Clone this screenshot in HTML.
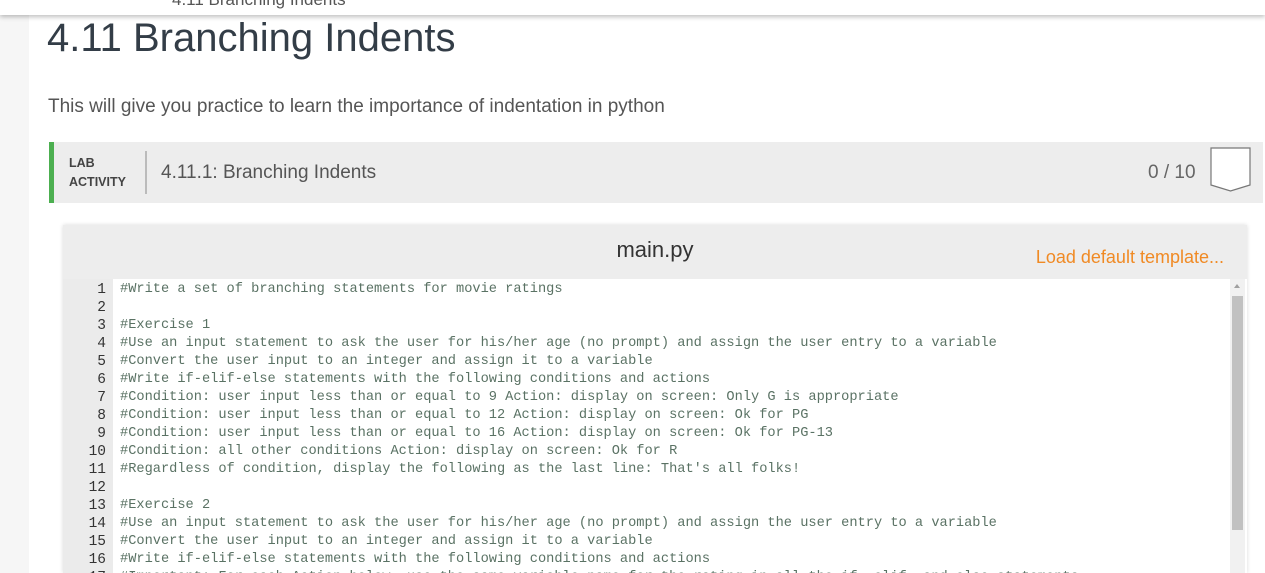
<!DOCTYPE html>
<html style="margin:0;width:1265px;height:573px;overflow:hidden"><head><style>
body{margin:0;width:1265px;height:573px;overflow:hidden;background:#f6f6f6;font-family:"Liberation Sans",sans-serif;position:relative}
.main{position:absolute;left:29px;top:0;width:1236px;height:573px;background:#fff}
.top{position:absolute;left:0;top:0;width:1265px;height:15px;background:#fff;box-shadow:0 2px 5px rgba(0,0,0,.25);z-index:5;overflow:hidden}
.top span{position:absolute;left:172px;top:-10px;font-size:17px;color:#555}
h1{position:absolute;left:47px;top:16px;margin:0;font-weight:normal;font-size:40px;color:#333d47}
.desc{position:absolute;left:48px;top:96px;font-size:19px;color:#555}
.lab{position:absolute;left:49px;top:142px;width:1214px;height:61px;background:#ededed;border-left:5px solid #4caf50;box-sizing:border-box}
.lab .t{position:absolute;left:15px;top:12px;font-size:12.5px;font-weight:bold;color:#444;line-height:19px}
.lab .sep{position:absolute;left:91px;top:9px;width:2px;height:43px;background:#bbb}
.lab .n{position:absolute;left:107px;top:20px;font-size:19px;color:#555}
.lab .s{position:absolute;left:1094px;top:20px;font-size:19px;color:#666}
.ed{position:absolute;left:63px;top:225px;width:1184px;height:348px;overflow:hidden;background:#fff;box-shadow:0 0 4px rgba(0,0,0,.15)}
.eh{height:54px;background:#ededed;position:relative}
.eh .f{position:absolute;left:0;right:0;top:12px;text-align:center;font-size:22px;color:#333}
.eh .l{position:absolute;right:23px;top:22px;font-size:18px;color:#f08a24}
.gut{position:absolute;left:0;top:54px;width:50px;height:310px;background:#ebebeb}
pre{margin:0;font-family:"Liberation Mono",monospace;font-size:13.67px;line-height:18px;position:absolute;top:56px}
.nums{left:0;width:43px;text-align:right;color:#333;font-size:14.5px}
.code{left:57px;color:#5a7264}
.sb{position:absolute;left:1167px;top:54px;width:15px;height:310px;background:#f1f1f1}
.th{position:absolute;left:2px;top:17px;width:11px;height:234px;background:#c1c1c1}
</style></head><body>
<div class="main"></div>
<div class="top"><span>4.11 Branching Indents</span></div>
<h1>4.11 Branching Indents</h1>
<div class="desc">This will give you practice to learn the importance of indentation in python</div>
<div class="lab"><div class="t">LAB<br>ACTIVITY</div><div class="sep"></div><div class="n">4.11.1: Branching Indents</div><div class="s">0 / 10</div>
<svg style="position:absolute;left:1156px;top:5px" width="42" height="46"><path d="M1 1H40V38L20.5 44L1 38Z" fill="#fff" stroke="#777" stroke-width="1.2"/></svg></div>
<div class="ed"><div class="eh"><div class="f">main.py</div><div class="l">Load default template...</div></div>
<div class="gut"></div>
<pre class="nums">1
2
3
4
5
6
7
8
9
10
11
12
13
14
15
16
17</pre>
<pre class="code">#Write a set of branching statements for movie ratings

#Exercise 1
#Use an input statement to ask the user for his/her age (no prompt) and assign the user entry to a variable
#Convert the user input to an integer and assign it to a variable
#Write if-elif-else statements with the following conditions and actions
#Condition: user input less than or equal to 9 Action: display on screen: Only G is appropriate
#Condition: user input less than or equal to 12 Action: display on screen: Ok for PG
#Condition: user input less than or equal to 16 Action: display on screen: Ok for PG-13
#Condition: all other conditions Action: display on screen: Ok for R
#Regardless of condition, display the following as the last line: That's all folks!

#Exercise 2
#Use an input statement to ask the user for his/her age (no prompt) and assign the user entry to a variable
#Convert the user input to an integer and assign it to a variable
#Write if-elif-else statements with the following conditions and actions
#Important: For each Action below, use the same variable name for the rating in all the if, elif, and else statements</pre>
<div class="sb"><div style="position:absolute;left:4px;top:5px;border:3.5px solid transparent;border-bottom:4px solid #a0a0a0;border-top:0"></div><div class="th"></div></div>
</div>
</body></html>
